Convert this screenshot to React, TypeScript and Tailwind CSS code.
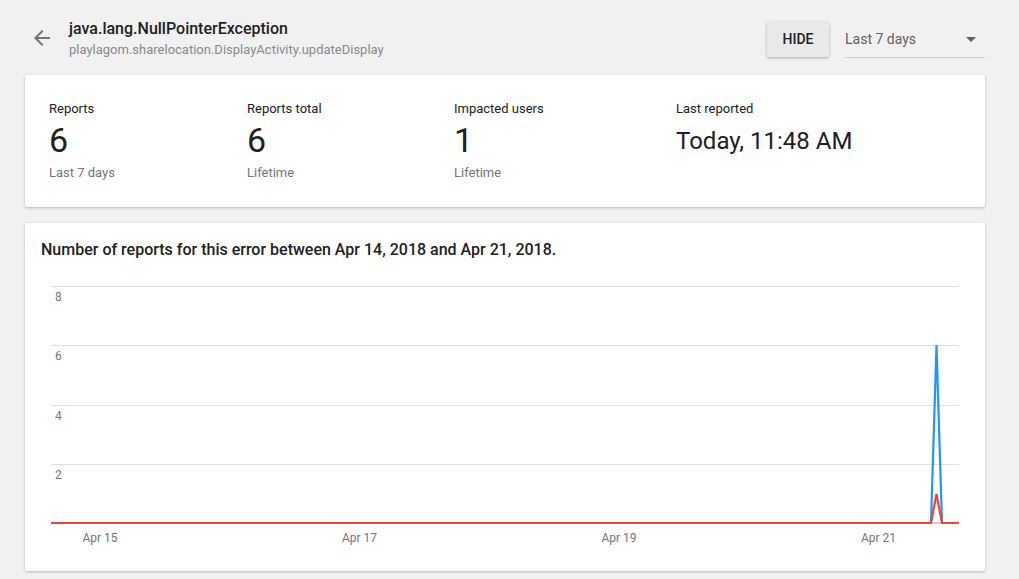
import React from "react";

const font = "font-['Roboto',sans-serif]";

const StatItem = ({ label, value, sub, w }: { label: string; value: string; sub: string; w: string }) => (
  <div className={`flex flex-col ${w}`}>
    <span className="text-[13px] leading-[16px] text-[#212121]">{label}</span>
    <span className="mt-[3px] text-[34px] leading-[40px] text-[#212121]">{value}</span>
    <span className="mt-[5px] text-[13px] leading-[16px] text-[#757575]">{sub}</span>
  </div>
);

const ReportsChart = () => {
  const grid = [6, 65, 125, 184];
  const yLabels = ["8", "6", "4", "2"];
  const xLabels = [
    { x: 75, t: "Apr 15" },
    { x: 334.5, t: "Apr 17" },
    { x: 594, t: "Apr 19" },
    { x: 853.5, t: "Apr 21" },
  ];
  return (
    <svg width="960" height="291" className="block">
      {grid.map((y) => (
        <line key={y} x1="26" x2="934" y1={y + 0.5} y2={y + 0.5} stroke="#e0e0e0" strokeWidth="1" />
      ))}
      {yLabels.map((l, i) => (
        <text key={l} x="30" y={grid[i] + 14.5} fontSize="12" fill="#757575" fontFamily="Roboto, sans-serif">
          {l}
        </text>
      ))}
      <line x1="26" x2="934" y1="243" y2="243" stroke="#9e9e9e" strokeWidth="1" />
      <polyline
        points="26,243 906,243 911.5,65 917,243 934,243"
        fill="none"
        stroke="#2196f3"
        strokeWidth="2.2"
      />
      <polyline
        points="26,243 906,243 911.5,214 917,243 934,243"
        fill="none"
        stroke="#f44336"
        strokeWidth="2.2"
      />
      {xLabels.map((l) => (
        <text key={l.t} x={l.x} y="262" fontSize="12" textAnchor="middle" fill="#757575" fontFamily="Roboto, sans-serif">
          {l.t}
        </text>
      ))}
    </svg>
  );
};

export default function App() {
  return (
    <div className={`${font} bg-[#f1f1f1] w-[1019px] h-[579px] overflow-hidden`}>
      <div className="ml-[25px] w-[960px]">
        {/* Header */}
        <div className="flex justify-between h-[75px]">
          <div className="flex pl-[5px]">
            <div className="pt-[26px]">
              <svg width="24" height="24" viewBox="0 0 24 24">
                <path d="M20 11H7.83l5.59-5.59L12 4l-8 8 8 8 1.41-1.41L7.83 13H20v-2z" fill="#757575" />
              </svg>
            </div>
            <div className="ml-[15px] pt-[19px] flex flex-col">
              <span className="text-[16px] leading-[20px] font-medium text-[#212121]">java.lang.NullPointerException</span>
              <span className="mt-[3px] text-[13px] leading-[16px] text-[#8a8a8a]">
                playlagom.sharelocation.DisplayActivity.updateDisplay
              </span>
            </div>
          </div>
          <div className="flex items-start gap-4 pt-[22px]">
            <button className="h-[35px] w-[62px] rounded-[2px] bg-[#e9e9e9] shadow-[0_1px_3px_rgba(0,0,0,0.3)] text-[14px] font-medium text-[#212121]">
              HIDE
            </button>
            <div className="w-[140px] h-[36px] flex items-center justify-between border-b border-[#cfcfcf]">
              <span className="text-[14px] text-[#616161]">Last 7 days</span>
              <svg width="10" height="5" viewBox="0 0 10 5" className="mr-[9px]">
                <path d="M0 0h10L5 5z" fill="#616161" />
              </svg>
            </div>
          </div>
        </div>

        {/* Stats card */}
        <div className="bg-white rounded-[2px] shadow-[0_1px_3px_rgba(0,0,0,0.25)] h-[132px] pl-[24px] pt-[26px] flex">
          <StatItem label="Reports" value="6" sub="Last 7 days" w="w-[198px]" />
          <StatItem label="Reports total" value="6" sub="Lifetime" w="w-[207px]" />
          <StatItem label="Impacted users" value="1" sub="Lifetime" w="w-[222px]" />
          <div className="flex flex-col">
            <span className="text-[13px] leading-[16px] text-[#212121]">Last reported</span>
            <span className="mt-[10px] text-[24px] leading-[28px] text-[#212121]">Today, 11:48 AM</span>
          </div>
        </div>

        {/* Chart card */}
        <div className="mt-[16px] bg-white rounded-[2px] shadow-[0_1px_3px_rgba(0,0,0,0.25)] h-[348px] flex flex-col">
          <div className="h-[57px] pl-[16px] pt-[15px]">
            <span className="text-[16px] leading-[24px] font-medium text-[#212121]">
              Number of reports for this error between Apr 14, 2018 and Apr 21, 2018.
            </span>
          </div>
          <ReportsChart />
        </div>
      </div>
    </div>
  );
}
